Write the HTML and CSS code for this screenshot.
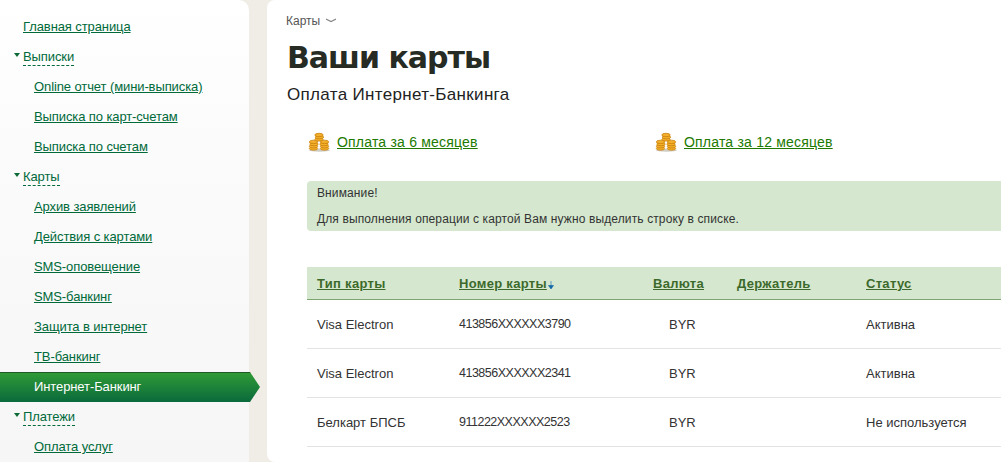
FILE: index.html
```html
<!doctype html>
<html lang="ru">
<head>
    <meta charset="UTF-8">
    <title>Ваши карты</title>
    <link rel="stylesheet" href="styles.css">
</head>
<body>
<div class="page">

    <ul class="menu">
        <li class="menu-item"><a href="#">Главная страница</a></li>
        <li class="menu-item group"><a href="#">Выписки</a></li>
        <li class="menu-item sub"><a href="#">Online отчет (мини-выписка)</a></li>
        <li class="menu-item sub"><a href="#">Выписка по карт-счетам</a></li>
        <li class="menu-item sub"><a href="#">Выписка по счетам</a></li>
        <li class="menu-item group"><a href="#">Карты</a></li>
        <li class="menu-item sub"><a href="#">Архив заявлений</a></li>
        <li class="menu-item sub"><a href="#">Действия с картами</a></li>
        <li class="menu-item sub"><a href="#">SMS-оповещение</a></li>
        <li class="menu-item sub"><a href="#">SMS-банкинг</a></li>
        <li class="menu-item sub"><a href="#">Защита в интернет</a></li>
        <li class="menu-item sub"><a href="#">ТВ-банкинг</a></li>
        <li class="menu-item sub active"><a href="#">Интернет-Банкинг</a></li>
        <li class="menu-item group"><a href="#">Платежи</a></li>
        <li class="menu-item sub"><a href="#">Оплата услуг</a></li>
    </ul>

    <div class="content">
        <div class="crumbs">
            Карты
            <svg width="10" height="5" viewBox="0 0 10 5"><path d="M0 1 L5 3.5 L10 1" fill="none" stroke="#888" stroke-width="1.2"/></svg>
        </div>
        <h1>Ваши карты</h1>
        <h2>Оплата Интернет-Банкинга</h2>

        <div class="pay-links">
            <div class="pay-link">
                <svg class="coins" width="24" height="20" viewBox="0 0 24 20">
                    <defs>
                        <ellipse id="coin" rx="4.2" ry="1.7" fill="#f3b02a" stroke="#c9800e" stroke-width="0.8"/>
                        <g id="coin-stacks">
                            <ellipse cx="12.5" cy="18.2" rx="10.5" ry="1.5" fill="#cfccc4"/>
                            <use href="#coin" x="6.5" y="16.5"/>
                            <use href="#coin" x="6.5" y="14.3"/>
                            <use href="#coin" x="7" y="12.1"/>
                            <use href="#coin" x="6.5" y="9.9"/>
                            <use href="#coin" x="17.5" y="16.5"/>
                            <use href="#coin" x="17.5" y="14.3"/>
                            <use href="#coin" x="17" y="12.1"/>
                            <use href="#coin" x="17.5" y="9.9"/>
                            <use href="#coin" x="12" y="7.4"/>
                            <use href="#coin" x="12.5" y="5.2"/>
                            <use href="#coin" x="12" y="3"/>
                        </g>
                    </defs>
                    <use href="#coin-stacks"/>
                </svg>
                <a href="#">Оплата за 6 месяцев</a>
            </div>
            <div class="pay-link">
                <svg class="coins" width="24" height="20" viewBox="0 0 24 20">
                    <use href="#coin-stacks"/>
                </svg>
                <a href="#">Оплата за 12 месяцев</a>
            </div>
        </div>

        <div class="notice">
            <p>Внимание!</p>
            <p>Для выполнения операции с картой Вам нужно выделить строку в списке.</p>
        </div>

        <table class="cards">
            <tr>
                <th class="col-type"><a href="#">Тип карты</a></th>
                <th class="col-number"><a href="#">Номер карты</a><svg class="sort" width="6" height="8" viewBox="0 0 6 8"><path d="M3 0v5M0.5 4.5h5L3 8z" fill="#1167a8" stroke="#1167a8" stroke-width="0.6"/></svg></th>
                <th class="col-currency"><a href="#">Валюта</a></th>
                <th class="col-holder"><a href="#">Держатель</a></th>
                <th class="col-status"><a href="#">Статус</a></th>
            </tr>
            <tr>
                <td>Visa Electron</td>
                <td class="number">413856XXXXXX3790</td>
                <td class="currency">BYR</td>
                <td></td>
                <td>Активна</td>
            </tr>
            <tr>
                <td>Visa Electron</td>
                <td class="number">413856XXXXXX2341</td>
                <td class="currency">BYR</td>
                <td></td>
                <td>Активна</td>
            </tr>
            <tr>
                <td>Белкарт БПСБ</td>
                <td class="number">911222XXXXXX2523</td>
                <td class="currency">BYR</td>
                <td></td>
                <td>Не используется</td>
            </tr>
        </table>
    </div>

</div>
</body>
</html>
```

FILE: styles.css
```css
html, body {
    margin: 0;
    height: 462px;
    overflow: hidden;
}
body {
    background: #f0ede6;
    font-family: "Liberation Sans", Arial, sans-serif;
    font-size: 12px;
    color: #333;
}
.page {
    display: grid;
    grid-template-columns: 249px 1fr;
    column-gap: 18px;
    height: 462px;
}

/* left menu */
.menu {
    list-style: none;
    margin: 0;
    padding: 12px 0 0 0;
    background: linear-gradient(#ffffff 0, #fbfbfb 150px, #f6f6f6 100%);
    border-top-right-radius: 10px;
    font-size: 13px;
    letter-spacing: -0.1px;
}
.menu-item {
    height: 30px;
    line-height: 30px;
    padding-left: 23px;
    white-space: nowrap;
}
.menu-item a {
    color: #006a3a;
}
.menu-item.sub {
    padding-left: 34px;
}
.menu-item.group {
    position: relative;
}
.menu-item.group::before {
    content: "";
    position: absolute;
    left: 14px;
    top: 11px;
    border-left: 3.5px solid transparent;
    border-right: 3.5px solid transparent;
    border-top: 4px solid #0c6b35;
}
.menu-item.group a {
    text-decoration: none;
    border-bottom: 1px dashed #006a3a;
    padding-bottom: 1px;
}
.menu-item.active {
    box-sizing: border-box;
    width: 260px;
    border-top: 1px solid #1c5a26;
    line-height: 28px;
    background: linear-gradient(#2f9a36, #0a6a3c);
    clip-path: polygon(0 0, 250px 0, 260px 50%, 250px 100%, 0 100%);
}
.menu-item.active a {
    color: #fff;
    text-decoration: none;
}

/* main part */
.content {
    background: #fff;
    border-top-left-radius: 8px;
    border-bottom-left-radius: 8px;
    padding: 13px 0 0 19px;
    min-width: 0;
}
.crumbs {
    font-size: 12px;
    line-height: 16px;
    color: #555;
}
.crumbs svg {
    margin-left: 2px;
    vertical-align: 2px;
}
h1 {
    margin: 7px 0 0 1px;
    font-family: "DejaVu Sans", sans-serif;
    font-size: 30px;
    letter-spacing: -1px;
    line-height: 44px;
    font-weight: bold;
    color: #262b23;
}
h2 {
    margin: 4px 0 0 1px;
    font-size: 17px;
    letter-spacing: 0.33px;
    line-height: 22px;
    font-weight: normal;
    color: #222;
}
.pay-links {
    display: flex;
    margin: 24px 0 0 21px;
}
.pay-link {
    display: flex;
    align-items: center;
    gap: 6px;
    width: 349px;
    height: 24px;
    font-size: 14px;
    letter-spacing: 0.2px;
}
.pay-link a {
    color: #217a00;
}
.notice {
    margin: 27px 0 0 21px;
    padding: 4px 10px 6px;
    height: 40px;
    background: #d5e8cf;
    border-top-left-radius: 4px;
    border-bottom-left-radius: 4px;
}
.notice p {
    margin: 0;
    line-height: 16px;
    padding-bottom: 10px;
    font-size: 12px;
    letter-spacing: 0.12px;
}
.cards {
    margin: 36px 0 0 21px;
    width: 694px;
    table-layout: fixed;
    border-collapse: collapse;
}
.cards th {
    height: 32px;
    padding: 0 0 0 10px;
    text-align: left;
    font-size: 13px;
    letter-spacing: 0.3px;
    background: #d5e8cf;
    border-bottom: 1px solid #7fa573;
}
.cards th a {
    color: #3d6a2c;
}
.cards td {
    height: 48px;
    padding: 0 0 0 10px;
    border-bottom: 1px solid #e3e3e3;
    white-space: nowrap;
    font-size: 13px;
}
.col-type { width: 132px; }
.col-number { width: 184px; }
.col-currency { width: 74px; }
.col-holder { width: 119px; }
.cards td.number {
    font-size: 12.5px;
    letter-spacing: -0.5px;
}
.cards td.currency {
    padding-left: 26px;
}
.sort {
    margin-left: 1px;
    vertical-align: -1px;
}
```
